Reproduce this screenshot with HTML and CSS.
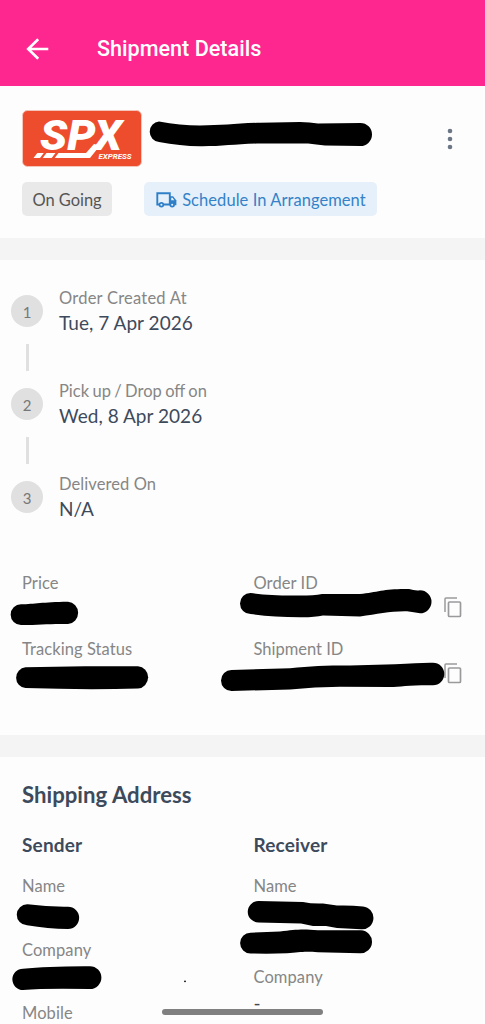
FILE: index.html
```html
<!DOCTYPE html>
<html lang="en">
<head>
<meta charset="utf-8">
<title>Shipment Details</title>
<link rel="stylesheet" href="styles.css">
</head>
<body>
<div class="screen">
  <header class="appbar">
    <svg class="back" viewBox="0 0 24 24" width="24" height="24"><path d="M22.300 12H2.400M12.200 2.200L2.200 12l10 9.800" fill="none" stroke="#fff" stroke-width="2.600"/></svg>
    <h1 class="title">Shipment Details</h1>
  </header>

  <section class="summary">
    <div class="courier">
      <svg class="logo" viewBox="0 0 120 58" width="120" height="58">
        <rect x="0.5" y="0.5" width="119" height="56" rx="5" fill="#ee4d2d" stroke="#f3c5bb" stroke-width="1"/>
        <text class="logo-name" x="18" y="39.500" textLength="82" lengthAdjust="spacingAndGlyphs">SPX</text>
        <path d="M15.300 43h6.500l-3.800 5h-6.500zM24.500 43h9l-3.800 5h-9zM36.500 43h27.500l8-9 6 1.500L68 48H32.700z" fill="#fff"/>
        <text class="logo-sub" x="76.500" y="48.500" textLength="33" lengthAdjust="spacingAndGlyphs">EXPRESS</text>
      </svg>
      <svg class="more" viewBox="0 0 6 22" width="6" height="22" fill="#6b7787"><circle cx="3" cy="3" r="2.300"/><circle cx="3" cy="11" r="2.300"/><circle cx="3" cy="19" r="2.300"/></svg>
    </div>
    <div class="tags">
      <span class="tag">On Going</span>
      <span class="tag tag-blue">
        <svg class="truck" viewBox="0 0 21 16" width="21" height="16">
          <path d="M3 12.500H1.300V1.300h12.500v11.200H7.500" fill="none" stroke="#2f7fc8" stroke-width="1.900"/>
          <path d="M13.500 4.300h3.600l3.300 4.200v4.700h-7z" fill="#2f7fc8"/>
          <path d="M15.200 5.800h1.400l1.700 2.500h-3.100z" fill="#e5f0fa"/>
          <g fill="#e5f0fa" stroke="#2f7fc8" stroke-width="1.700"><circle cx="5.400" cy="12.800" r="1.900"/><circle cx="16.200" cy="12.800" r="1.900"/></g>
        </svg>
        <span>Schedule In Arrangement</span>
      </span>
    </div>
  </section>

  <section class="progress">
    <ol class="steps">
      <li class="step"><div class="rail"><span class="dot">1</span><span class="line"></span></div><div><div class="label label-wide">Order Created At</div><div class="value">Tue, 7 Apr 2026</div></div></li>
      <li class="step"><div class="rail"><span class="dot">2</span><span class="line"></span></div><div><div class="label label-tight">Pick up / Drop off on</div><div class="value">Wed, 8 Apr 2026</div></div></li>
      <li class="step"><div class="rail"><span class="dot">3</span></div><div><div class="label">Delivered On</div><div class="value">N/A</div></div></li>
    </ol>
    <div class="facts">
      <div class="label">Price</div>
      <div class="copyable"><div class="label">Order ID</div>
        <svg class="copy" viewBox="0 0 18 21" width="18" height="21"><path d="M1 15V2Q1 1 2 1h11" fill="none" stroke="#9a9a9d" stroke-width="1.500"/><rect x="4.500" y="5" width="12" height="14.500" rx="1" fill="none" stroke="#9a9a9d" stroke-width="1.700"/></svg></div>
      <div class="label">Tracking Status</div>
      <div class="copyable"><div class="label label-id">Shipment ID</div>
        <svg class="copy" viewBox="0 0 18 21" width="18" height="21"><path d="M1 15V2Q1 1 2 1h11" fill="none" stroke="#9a9a9d" stroke-width="1.500"/><rect x="4.500" y="5" width="12" height="14.500" rx="1" fill="none" stroke="#9a9a9d" stroke-width="1.700"/></svg></div>
    </div>
  </section>

  <section class="address">
    <h2 class="heading">Shipping Address</h2>
    <div class="parties">
      <div class="party">
        <h3 class="subheading">Sender</h3>
        <div class="label field">Name</div>
        <div class="label field">Company</div>
        <div class="label field">Mobile</div>
      </div>
      <div class="party">
        <h3 class="subheading">Receiver</h3>
        <div class="label field field-tall">Name</div>
        <div class="label">Company</div>
        <div class="value">-</div>
      </div>
    </div>
  </section>

  <!-- Marker strokes that hide private values -->
  <svg class="marker" viewBox="0 0 485 1024" width="485" height="1024">
    <path d="M159 121.500Q180 125.500 200 125.500C222 125.500 235 123.500 260 122.700L300 122Q310 122 318 123.500L360.500 123A11.300 11.300 0 0 1 360.500 146L325 145.500Q316 144.500 308 143.500L260 143.500C235 144 222 146.500 200 146.300Q180 146 159 142A10.300 10.300 0 0 1 159 121.500Z"/>
    <path d="M21 604.300C35 604 42 602 68 601.700A11.200 11.200 0 0 1 68 624C50 623.500 40 625 21 625A10.300 10.300 0 0 1 21 604.300Z"/>
    <path d="M25.500 667.300L85 666.200L138 666.200A11.200 11.200 0 0 1 138 688.500Q85 690 25.500 688A10.400 10.400 0 0 1 25.500 667.300Z"/>
    <path d="M250.500 593Q272 596 300 595.500Q314 595.500 322 594L360 594C378 592 385 588.500 409 589Q415 591 420 590.300A11.500 11.500 0 0 1 420 613.300Q414 612.500 407 611.300C390 611 378 614 360 616.500L323 615.500Q314 617.500 300 617.300Q272 617 250.500 614A10.500 10.500 0 0 1 250.500 593Z"/>
    <path d="M231.500 670L290 668.300C310 666 325 665.500 350 665.500L395 664.300Q420 662.500 433 662.700A11.300 11.300 0 0 1 433 685.300C410 685 400 687 390 687L340 686.700Q315 687 290 689.500L231.500 691A10.500 10.500 0 0 1 231.500 670Z"/>
    <path d="M27.500 904.300Q48 907 68 906.700A11.100 11.100 0 0 1 68 929Q48 929 27 925.300A10.500 10.500 0 0 1 27.500 904.300Z"/>
    <path d="M23 968.700Q48 966 90 966.200A11.400 11.400 0 0 1 90 989Q45 988 23 990A10.600 10.600 0 0 1 23 968.700Z"/>
    <path d="M258.500 901L303 902Q312 904 323 903.500L337 905.500Q350 905 363 906.500A11.400 11.400 0 0 1 361 929.300L337 928L326 926L313 926L301 923.500L258.500 922.500A10.500 10.500 0 0 1 258.500 901Z"/>
    <path d="M250.500 932.700L280 931.500C295 930 300 928.800 318 930.300L361 930.300A11.400 11.400 0 0 1 360 953.300L318 952.300C305 951 300 952 287 953.300Q270 954 250.500 953.500A10.400 10.400 0 0 1 250.500 932.700Z"/>
    <circle cx="185" cy="981.300" r="0.900"/>
  </svg>
  <div class="home-bar"></div>
</div>
</body>
</html>
```
FILE: styles.css
```css
* { box-sizing: border-box; }
body { margin: 0; background: #fdfdfd; font-family: Lato, "Liberation Sans", sans-serif; }
h1, h2, h3, ol { margin: 0; padding: 0; }
svg { display: block; flex: none; }

.screen { position: relative; width: 485px; height: 1024px; overflow: hidden; }

.appbar { display: flex; align-items: center; gap: 47px; height: 86px; padding: 12px 26px 0; background: #fe278f; }
.title { color: #fff; font: 500 21.600px/28px Roboto, sans-serif; }

.summary { height: 152px; padding: 24px 22px 0; }
.courier { display: flex; justify-content: space-between; align-items: center; padding-right: 10px; }
.logo { overflow: visible; }
.logo-name { fill: #fff; font: italic 900 42px Roboto, sans-serif; }
.logo-sub { fill: #fff; font: italic 700 7.500px Roboto, sans-serif; }
.tags { display: flex; gap: 32px; margin-top: 14px; }
.tag { display: flex; align-items: center; height: 34px; padding: 1px 10.500px 0; border-radius: 5px; background: #e9e9e9; color: #555; font-size: 16.500px; letter-spacing: -0.050px; white-space: nowrap; }
.tag-blue { gap: 5.500px; padding: 1px 11px 0 11.500px; letter-spacing: 0.060px; background: #e5f0fa; color: #3482c8; }

.progress { height: 519px; padding-top: 26px; border: solid #f4f4f4; border-width: 22px 0; }
.steps { list-style: none; }
.step { display: flex; gap: 16px; height: 93px; padding-left: 11px; }
.rail { display: flex; flex-direction: column; align-items: center; width: 32px; padding-top: 9px; }
.dot { width: 32px; height: 32px; border-radius: 50%; background: #e0e0e0; color: #777; font-size: 15px; line-height: 34px; text-align: center; }
.line { width: 3px; height: 27px; margin-top: 17px; background: #e0e0e0; }
.label { color: #868686; font-size: 16.500px; line-height: 24px; letter-spacing: 0.080px; white-space: nowrap; }
.label-wide { letter-spacing: 0.230px; }
.label-tight { letter-spacing: 0; word-spacing: -0.850px; }
.label-id { letter-spacing: 0; }
.value { color: #3d4a5c; font-size: 19px; line-height: 25px; letter-spacing: 0.040px; white-space: nowrap; }

.facts { display: grid; grid-template-columns: 231.500px 1fr; grid-auto-rows: 66px; padding: 6px 23px 0 22px; }
.copyable { display: flex; justify-content: space-between; }
.copy { margin-top: 26px; }

.address { padding: 24px 22px 0; }
.heading { color: #3d4a5c; font-size: 22.200px; font-weight: 700; line-height: 28px; }
.parties { display: grid; grid-template-columns: 231.500px 1fr; margin-top: 23px; }
.subheading { margin-bottom: 16px; color: #3d4a5c; font-size: 19px; font-weight: 700; line-height: 26px; letter-spacing: 0.180px; }
.field { height: 63.500px; }
.field-tall { height: 91px; }
.party .value { line-height: 27px; }

.marker { position: absolute; top: 0; left: 0; fill: #000; }
.home-bar { position: absolute; left: 162px; top: 1009px; width: 161px; height: 5.500px; border-radius: 3px; background: #808080; }
```
